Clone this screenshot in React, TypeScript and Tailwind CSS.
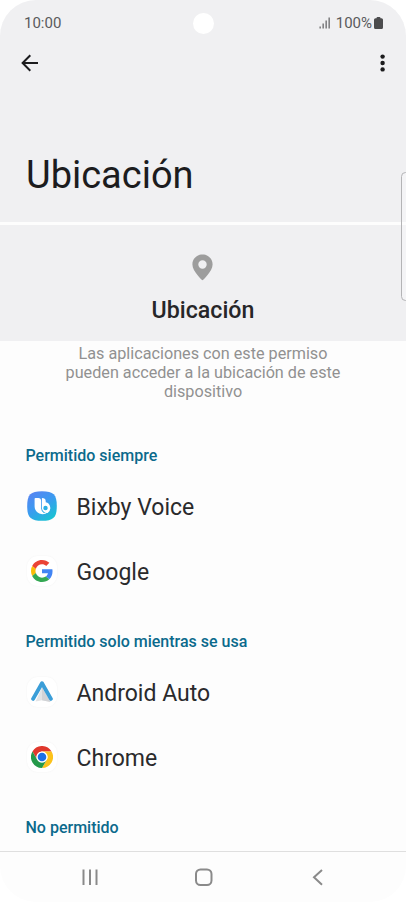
import type { ReactNode } from "react"

const BixbyIcon = () => (
  <svg width="30" height="30" viewBox="0 0 30 30">
    <defs>
      <linearGradient id="bixby" x1="0.1" y1="0" x2="0.75" y2="1">
        <stop offset="0" stopColor="#5a83f2" />
        <stop offset="0.5" stopColor="#3b9bf0" />
        <stop offset="1" stopColor="#18c3d2" />
      </linearGradient>
    </defs>
    <path d="M15 0.2C26.500 0.200 29.800 3.500 29.800 15S26.500 29.800 15 29.800 0.200 26.500 0.200 15 3.500 0.200 15 0.200Z" fill="url(#bixby)" />
    <path d="M7.600 7.800Q7.600 6.900 8.500 6.900H11.300Q14.100 6.900 14.100 10V17.200Q14.200 20.500 16.800 22L20.800 21.200A8 8 0 0 1 7.600 15.400Z" fill="#fff" />
    <path d="M14.900 6.900Q18.700 6.900 18.700 10V11.200A5.900 5.900 0 0 1 20.600 21.900A5.300 5.300 0 0 1 14.900 17.200Z" fill="#fff" />
    <circle cx="18.500" cy="17" r="2.200" fill="#2bb0e4" />
  </svg>
)

const GoogleIcon = () => (
  <svg width="22" height="22" viewBox="0 0 48 48">
    <path fill="#ea4335" d="M24 9.500c3.540 0 6.710 1.220 9.210 3.600l6.850-6.850C35.900 2.380 30.470 0 24 0 14.620 0 6.510 5.380 2.560 13.220l7.980 6.190C12.430 13.720 17.740 9.500 24 9.500z" />
    <path fill="#4285f4" d="M46.980 24.550c0-1.570-.15-3.090-.38-4.550H24v9.020h12.940c-.58 2.960-2.260 5.480-4.780 7.180l7.730 6c4.510-4.180 7.090-10.360 7.090-17.650z" />
    <path fill="#fbbc05" d="M10.530 28.590c-.48-1.450-.76-2.990-.76-4.590s.27-3.140.76-4.590l-7.980-6.190C.92 16.460 0 20.120 0 24c0 3.880.92 7.540 2.560 10.780l7.970-6.190z" />
    <path fill="#34a853" d="M24 48c6.480 0 11.930-2.130 15.890-5.810l-7.730-6c-2.150 1.450-4.920 2.300-8.160 2.300-6.260 0-11.570-4.220-13.470-9.910l-7.980 6.190C6.510 42.620 14.620 48 24 48z" />
  </svg>
)

const AndroidAutoIcon = () => (
  <svg width="22" height="22" viewBox="0 0 22 22">
    <path d="M11 6.500L4.500 20.500L11 19.200L19.500 20.900Z" fill="#e3e4e6" />
    <path d="M11 6.500V19.200L19.500 20.900Z" fill="#d2d3d6" />
    <path d="M2.100 17.900L11 2.300L19.900 17.900" fill="none" stroke="#3b9ed8" strokeWidth="3.900" strokeLinecap="round" strokeLinejoin="round" />
  </svg>
)

const ChromeIcon = () => (
  <svg width="22" height="22" viewBox="0 0 48 48">
    <path d="M3.200 12A24 24 0 0 1 44.800 12H24A12 12 0 0 0 13.600 30Z" fill="#e0382d" />
    <path d="M44.800 12A24 24 0 0 1 24 48L34.400 30A12 12 0 0 0 24 12Z" fill="#fcc21b" />
    <path d="M24 48A24 24 0 0 1 3.200 12L13.600 30A12 12 0 0 0 34.400 30Z" fill="#24994a" />
    <circle cx="24" cy="24" r="12" fill="#fff" />
    <circle cx="24" cy="24" r="9.400" fill="#1b70e6" />
  </svg>
)

const IconTile = ({ children }: { children: ReactNode }) => (
  <div className="flex size-[30px] items-center justify-center rounded-[11px] bg-white shadow-[0_0_2px_rgba(0,0,0,0.05)]">
    {children}
  </div>
)

const sections = [
  {
    title: "Permitido siempre",
    apps: [
      { name: "Bixby Voice", icon: <BixbyIcon /> },
      { name: "Google", icon: <IconTile><GoogleIcon /></IconTile> },
    ],
  },
  {
    title: "Permitido solo mientras se usa",
    apps: [
      { name: "Android Auto", icon: <IconTile><AndroidAutoIcon /></IconTile> },
      { name: "Chrome", icon: <IconTile><ChromeIcon /></IconTile> },
    ],
  },
  { title: "No permitido", apps: [] },
]

const StatusBar = () => (
  <div className="flex h-[46px] items-center justify-between pl-6 pr-[23px] text-[#5a5a5c]">
    <span className="w-[150px] text-[15px]">10:00</span>
    <div className="size-[21px] rounded-full bg-white" />
    <div className="flex w-[150px] items-center justify-end">
      <svg className="mr-[5px]" width="12" height="12" viewBox="0 0 12 12" fill="#68686a">
        <rect x="0.500" y="9.500" width="1.300" height="2" />
        <rect x="3.500" y="6.500" width="1.300" height="5" />
        <rect x="6.500" y="3.500" width="1.300" height="8" />
        <rect x="9.500" y="0.500" width="1.300" height="11" />
      </svg>
      <span className="text-[15px]">100%</span>
      <svg className="ml-[2px]" width="9" height="12" viewBox="0 0 9 12" fill="#4c4c4e">
        <path d="M2.500 1.200Q2.500 0 3.500 0H5.500Q6.500 0 6.500 1.200H7.500Q9 1.200 9 2.700V10.500Q9 12 7.500 12H1.500Q0 12 0 10.500V2.700Q0 1.200 1.500 1.200Z" />
      </svg>
    </div>
  </div>
)

const App = () => {
  return (
    <div className="h-[902px] w-[406px] bg-white font-['Roboto',sans-serif]">
      <div className="relative flex h-full flex-col overflow-hidden rounded-[36px] bg-[#fdfdfd]">
        <header className="h-[222px] bg-[#f0f0f2]">
          <StatusBar />
          <div className="flex h-[34px] items-center justify-between pl-[21px] pr-5">
            <svg width="18" height="18" viewBox="0 0 18 18" fill="none" stroke="#1c1c1e" strokeWidth="2">
              <path d="M17 9H1.800M9.300 1.300L1.600 9L9.300 16.700" />
            </svg>
            <svg width="6" height="18" viewBox="0 0 6 18" fill="#1c1c1e">
              <circle cx="2.600" cy="2.600" r="2.200" />
              <circle cx="2.600" cy="9" r="2.200" />
              <circle cx="2.600" cy="15.400" r="2.200" />
            </svg>
          </div>
          <h1 className="mt-[71px] pl-[26px] text-[38px] leading-[48px] text-[#1c1c1e]">Ubicación</h1>
        </header>

        <div className="mt-[3px] flex h-[116px] flex-col items-center bg-[#f0f0f2] pt-[29px]">
          <svg width="22" height="27" viewBox="0 0 22 27" fill="#9d9d9d">
            <path fillRule="evenodd" d="M10.500 0.600C4.700 0.600 0.400 5 0.400 10.400C0.400 17.300 10.500 26.300 10.500 26.300S20.600 17.300 20.600 10.400C20.600 5 16.300 0.600 10.500 0.600ZM10.500 6.300A4.200 4.200 0 1 1 10.500 14.700A4.200 4.200 0 1 1 10.500 6.300Z" />
          </svg>
          <h2 className="mt-[15px] text-[23.200px] font-medium leading-7 text-[#262628]">Ubicación</h2>
        </div>

        <main className="flex-1 overflow-hidden">
          <p className="mx-auto mt-[3px] w-[290px] text-center text-[16.200px] leading-[19px] text-[#919191]">
            Las aplicaciones con este permiso pueden acceder a la ubicación de este dispositivo
          </p>
          <div className="mt-[18px]">
            {sections.map((section) => (
              <section key={section.title}>
                <h3 className="h-14 pl-[25.500px] pt-[27px] text-[16px] font-medium leading-5 text-[#0b6a8c]">{section.title}</h3>
                {section.apps.map((app) => (
                  <div key={app.name} className="flex h-[65px] items-center gap-[19.500px] pl-[27px]">
                    <div className="pb-[3px]">{app.icon}</div>
                    <span className="text-[23px] leading-7 text-[#2a2a2c]">{app.name}</span>
                  </div>
                ))}
              </section>
            ))}
          </div>
        </main>

        <nav className="flex h-[51px] shrink-0 items-center border-t border-[#dfdfdf] pl-[82px]">
          <svg width="242" height="18" viewBox="0 0 242 18" fill="none" stroke="#8a8a8a" strokeWidth="2">
            <path d="M1.500 1.500V17M8 1.500V17M14.500 1.500V17" />
            <rect x="114" y="1.500" width="15.500" height="15.500" rx="4.500" />
            <path d="M240 2L232 9.300L240 16.700" />
          </svg>
        </nav>

        {/* edge panel handle */}
        <div className="absolute -right-1 top-[172px] h-[129px] w-[9px] rounded-[5px] border border-[#b4b4b6] bg-white/30" />
      </div>
    </div>
  )
}

export default App
